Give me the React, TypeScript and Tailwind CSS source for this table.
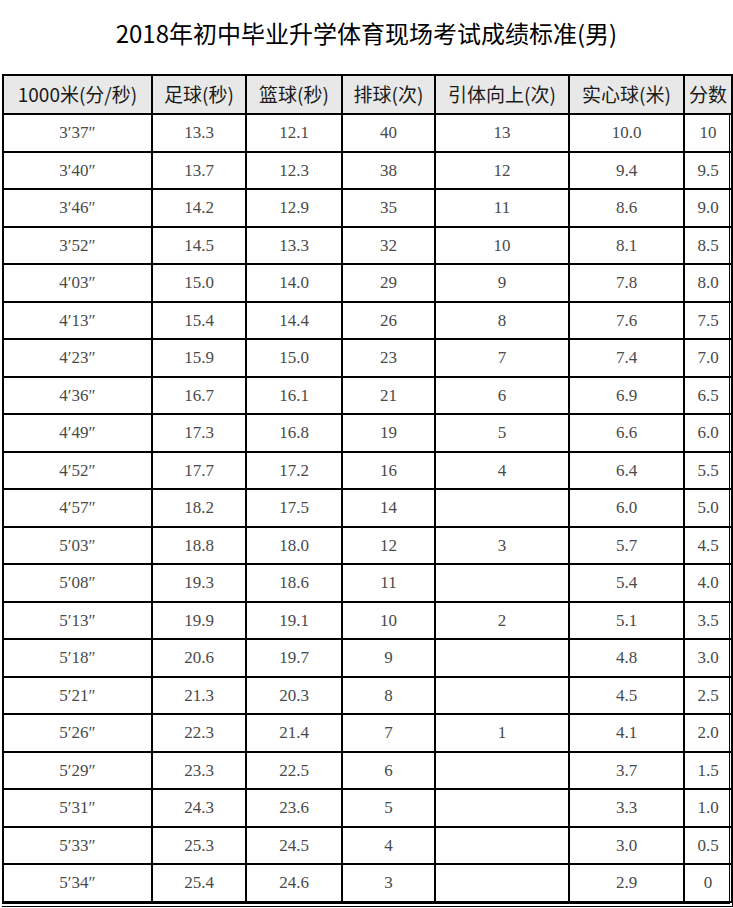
const rows: string[][] = [
  ["3′37″", "13.3", "12.1", "40", "13", "10.0", "10"],
  ["3′40″", "13.7", "12.3", "38", "12", "9.4", "9.5"],
  ["3′46″", "14.2", "12.9", "35", "11", "8.6", "9.0"],
  ["3′52″", "14.5", "13.3", "32", "10", "8.1", "8.5"],
  ["4′03″", "15.0", "14.0", "29", "9", "7.8", "8.0"],
  ["4′13″", "15.4", "14.4", "26", "8", "7.6", "7.5"],
  ["4′23″", "15.9", "15.0", "23", "7", "7.4", "7.0"],
  ["4′36″", "16.7", "16.1", "21", "6", "6.9", "6.5"],
  ["4′49″", "17.3", "16.8", "19", "5", "6.6", "6.0"],
  ["4′52″", "17.7", "17.2", "16", "4", "6.4", "5.5"],
  ["4′57″", "18.2", "17.5", "14", "", "6.0", "5.0"],
  ["5′03″", "18.8", "18.0", "12", "3", "5.7", "4.5"],
  ["5′08″", "19.3", "18.6", "11", "", "5.4", "4.0"],
  ["5′13″", "19.9", "19.1", "10", "2", "5.1", "3.5"],
  ["5′18″", "20.6", "19.7", "9", "", "4.8", "3.0"],
  ["5′21″", "21.3", "20.3", "8", "", "4.5", "2.5"],
  ["5′26″", "22.3", "21.4", "7", "1", "4.1", "2.0"],
  ["5′29″", "23.3", "22.5", "6", "", "3.7", "1.5"],
  ["5′31″", "24.3", "23.6", "5", "", "3.3", "1.0"],
  ["5′33″", "25.3", "24.5", "4", "", "3.0", "0.5"],
  ["5′34″", "25.4", "24.6", "3", "", "2.9", "0"],
];

const headers = ["1000米(分/秒)", "足球(秒)", "篮球(秒)", "排球(次)", "引体向上(次)", "实心球(米)", "分数"];
const widths = [149, 94, 96, 93, 134, 115, 48];

export default function App() {
  return (
    <div className="w-[733px] h-[908px] bg-white overflow-hidden">
      <h1 className="h-[74px] pt-[17px] text-center text-[24px] leading-[32px] text-black font-['Noto_Sans_CJK_SC',sans-serif]">
        2018年初中毕业升学体育现场考试成绩标准(男)
      </h1>
      <div className="ml-[2px] w-[731px] border-r-[4px] border-b-[4px] border-double border-black">
        <table className="w-[727px] table-fixed border-collapse">
          <colgroup>
            {widths.map((w, i) => (
              <col key={i} style={{ width: w }} />
            ))}
          </colgroup>
          <thead>
            <tr className="h-[39px] bg-[#e8e8e8]">
              {headers.map((h) => (
                <th
                  key={h}
                  className="border-2 border-black p-0 text-center text-[19px] font-normal text-[#1a1a1a] font-['Noto_Sans_CJK_SC',sans-serif] whitespace-nowrap"
                >
                  {h}
                </th>
              ))}
            </tr>
          </thead>
          <tbody>
            {rows.map((r, i) => (
              <tr key={i} className="h-[37.5px]">
                {r.map((c, j) => (
                  <td
                    key={j}
                    className="border-2 border-black p-0 text-center text-[17px] text-[#4a4a4a] font-['Liberation_Serif',serif]"
                  >
                    {c}
                  </td>
                ))}
              </tr>
            ))}
          </tbody>
        </table>
      </div>
    </div>
  );
}
